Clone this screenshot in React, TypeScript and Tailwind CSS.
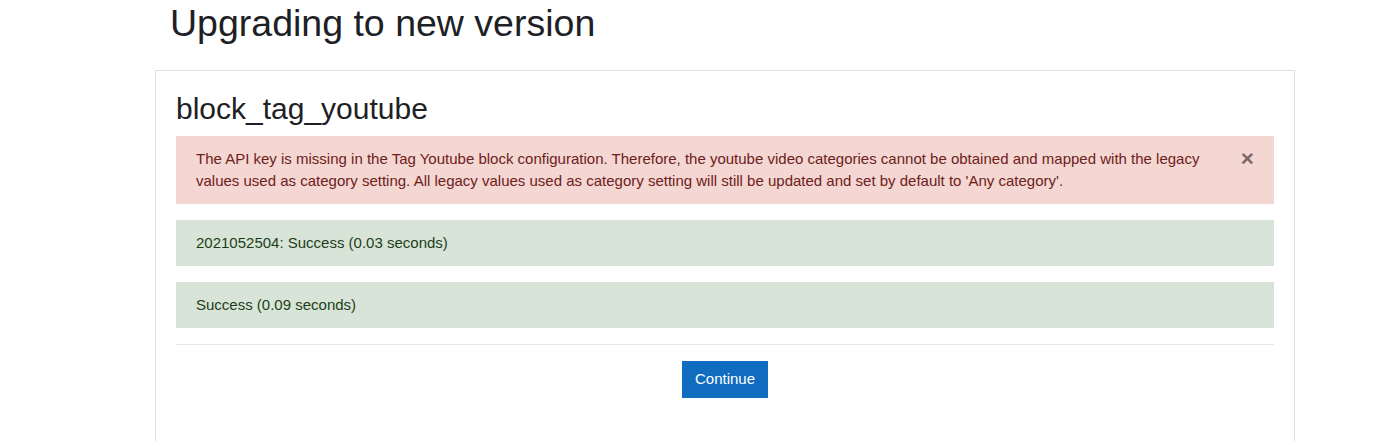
import React from 'react';

const messages = [
  '2021052504: Success (0.03 seconds)',
  'Success (0.09 seconds)',
];

export default function App() {
  return (
    <div className="min-h-[441px] bg-white font-['Liberation_Sans',Arial,sans-serif] text-[#1d2125]">
      <div className="ml-[155px] w-[1140px]">
        {/* Page heading */}
        <h1 className="pl-[15px] pt-px text-[37.5px] leading-[45px] font-normal">Upgrading to new version</h1>

        {/* Upgrade result card */}
        <div className="mt-[24px] border border-[#dedede] px-5 pt-5 pb-[80px]">
          <h2 className="mb-[9px] text-[30px] leading-[36px] font-normal">block_tag_youtube</h2>

          <div className="relative mb-4 bg-[#f4d6d3] py-[11.5px] pl-5 pr-16 text-[15px] leading-[22.5px] text-[#6e211a]">
            The API key is missing in the Tag Youtube block configuration. Therefore, the youtube video categories cannot be obtained and mapped with the legacy values used as category setting. All legacy values used as category setting will still be updated and set by default to 'Any category'.
            <button className="absolute top-0 right-0 px-5 py-[12px] text-[22.5px] leading-none font-bold text-black opacity-50">
              ×
            </button>
          </div>

          {messages.map((msg, i) => (
            <div key={i} className="mb-4 bg-[#d8e4d7] px-5 py-[11.75px] text-[15px] leading-[22.5px] text-[#1c3f1a]">
              {msg}
            </div>
          ))}

          <hr className="border-0 border-t border-[#e6e6e6]" />

          <div className="mt-4 flex justify-center">
            <button className="border border-[#0f6cbf] bg-[#0f6cbf] px-3 py-[6px] text-[15px] leading-[22.5px] text-white">
              Continue
            </button>
          </div>
        </div>
      </div>
    </div>
  );
}
